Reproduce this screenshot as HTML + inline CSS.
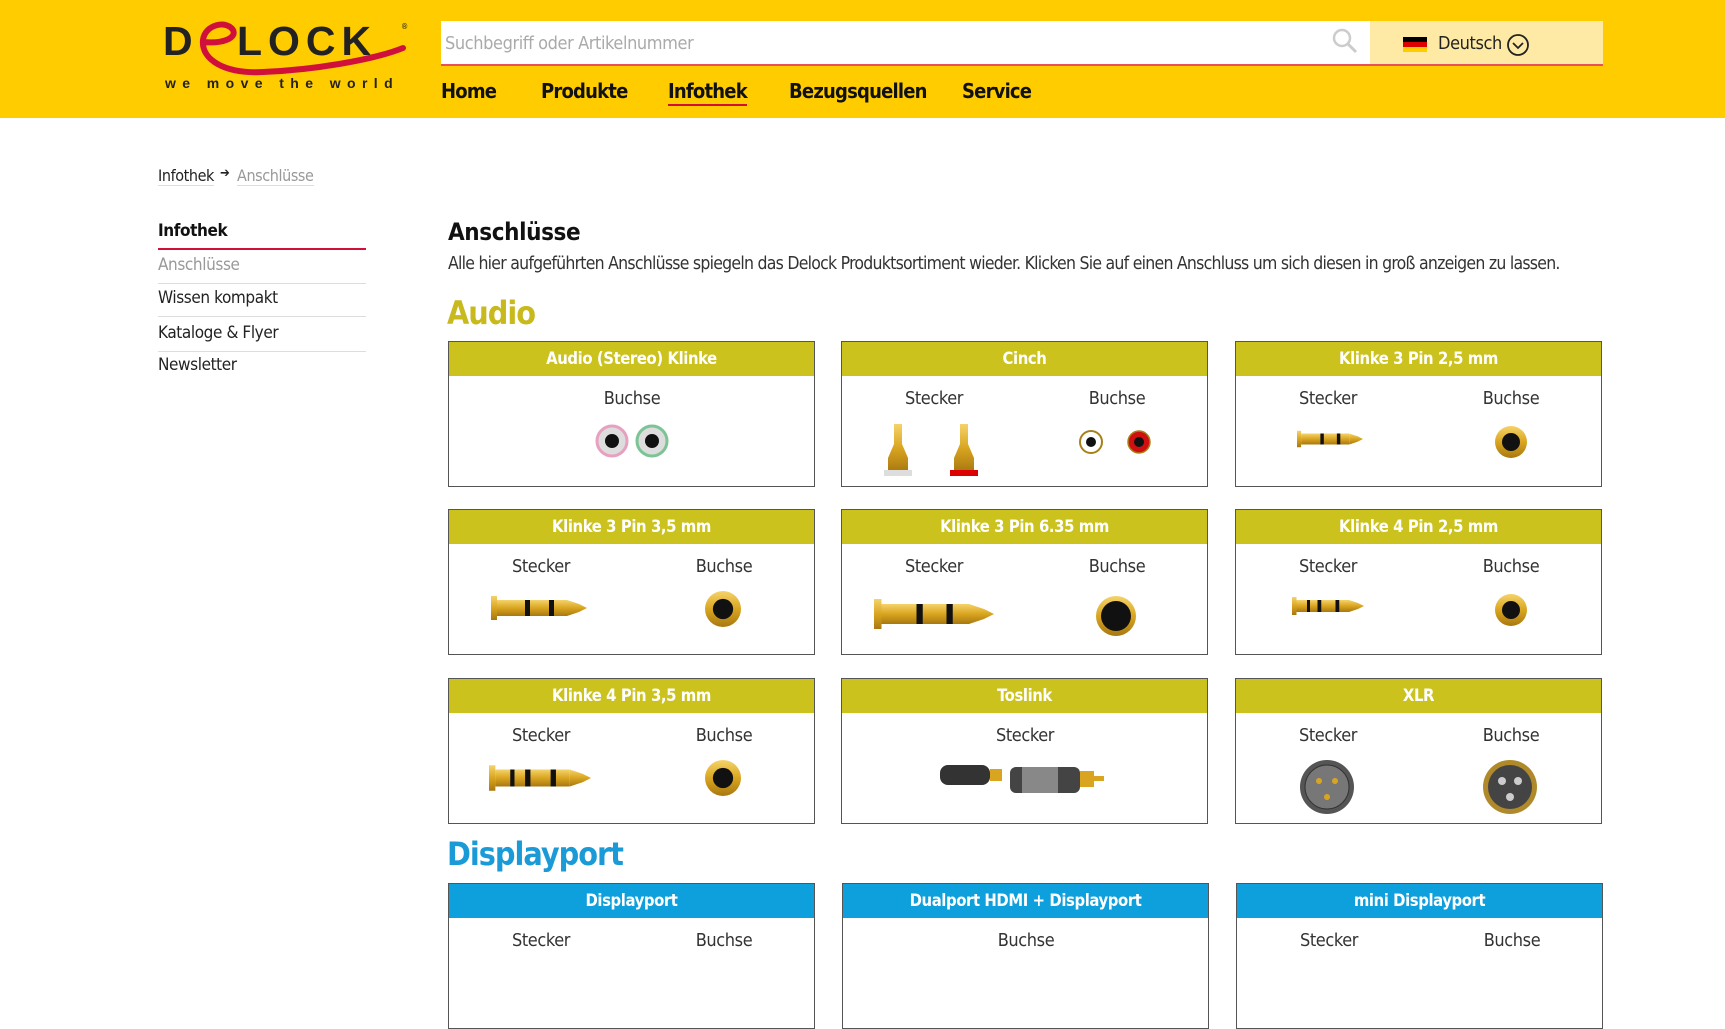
<!DOCTYPE html>
<html><head><meta charset="utf-8"><style>
*{margin:0;padding:0;box-sizing:border-box}
body{width:1725px;height:968px;overflow:hidden;background:#fff;font-family:"Liberation Sans Narrow","DejaVu Sans Condensed","Liberation Sans",sans-serif;color:#222;position:relative;letter-spacing:-0.4px}
.a{position:absolute}
#hd{left:0;top:0;width:1725px;height:118px;background:#ffcc00}
.nav{top:79px;font-size:20px;font-weight:bold;color:#111;letter-spacing:-0.8px}
.card{position:absolute;width:367px;height:146px;border:1px solid #555;background:#fff}
.card .h{height:34px;background:#cbc21e;color:#fff;font-weight:bold;font-size:16.5px;text-align:center;line-height:34px}
.card.b .h{background:#0ea0dc}
.lbl{position:absolute;top:46px;font-size:18px;color:#333;width:120px;margin-left:-60px;text-align:center}
.img{position:absolute;top:78px}
.side{left:158px;width:208px;font-size:17px;border-bottom:1px solid #ddd;height:34px;line-height:30px}
</style></head><body>
<div id="hd" class="a"></div>
<!-- logo -->
<div class="a" style="left:163px;top:18px;width:250px;height:80px;letter-spacing:0">
<div class="a" style="left:0;top:0;font-family:'Liberation Sans',sans-serif;font-weight:bold;font-size:41px;color:#222">D</div>
<div class="a" style="left:74px;top:0;font-family:'Liberation Sans',sans-serif;font-weight:bold;font-size:41px;color:#222;letter-spacing:6px">LOCK</div>
<div class="a" style="left:238px;top:4px;font-size:8px;color:#222">®</div>
<svg class="a" style="left:0;top:0" width="250" height="75"><path d="M40 24 C60 26 74 20 70 12 C64 2 42 6 40 22 C38 42 62 56 100 54 C150 52 210 42 240 30" fill="none" stroke="#d0103a" stroke-width="6" stroke-linecap="round"/></svg>
<div class="a" style="left:2px;top:57px;font-family:'Liberation Sans',sans-serif;font-weight:bold;font-size:14px;letter-spacing:6.4px;color:#222;white-space:nowrap">we move the world</div>
</div>
<!-- search -->
<div class="a" style="left:441px;top:21px;width:929px;height:45px;background:#fff;border-bottom:2px solid #e8505b"></div>
<div class="a" style="left:445px;top:33px;font-size:18px;color:#aaa">Suchbegriff oder Artikelnummer</div>
<svg class="a" style="left:1332px;top:28px" width="26" height="26"><circle cx="10" cy="10" r="8" fill="none" stroke="#ccc" stroke-width="2.5"/><line x1="16" y1="16" x2="24" y2="24" stroke="#ccc" stroke-width="3"/></svg>
<div class="a" style="left:1370px;top:21px;width:233px;height:45px;background:#ffeaa5;border-bottom:2px solid #e8505b"></div>
<div class="a" style="left:1403px;top:37px;width:24px;height:15px"><div style="height:5px;background:#000"></div><div style="height:5px;background:#d00"></div><div style="height:5px;background:#fc0"></div></div>
<div class="a" style="left:1438px;top:33px;font-size:18px;color:#222">Deutsch</div>
<svg class="a" style="left:1506px;top:33px" width="24" height="24"><circle cx="12" cy="12" r="10" fill="none" stroke="#222" stroke-width="1.8"/><path d="M7 10l5 5 5-5" fill="none" stroke="#222" stroke-width="1.8"/></svg>
<div class="a nav" style="left:441px">Home</div>
<div class="a nav" style="left:541px">Produkte</div>
<div class="a nav" style="left:668px;border-bottom:2px solid #d0103a;padding-bottom:1px">Infothek</div>
<div class="a nav" style="left:789px">Bezugsquellen</div>
<div class="a nav" style="left:962px">Service</div>
<!-- breadcrumb -->
<div class="a" style="left:158px;top:166px;font-size:16px;border-bottom:1px solid #ddd">Infothek</div>
<div class="a" style="left:220px;top:166px;font-size:13px">➔</div>
<div class="a" style="left:237px;top:166px;font-size:16px;color:#999;border-bottom:1px solid #ddd">Anschlüsse</div>
<!-- sidebar -->
<div class="a side" style="top:216px;font-weight:bold;border-bottom:2px solid #d0103a;font-size:17px;color:#111">Infothek</div>
<div class="a side" style="top:250px;color:#999">Anschlüsse</div>
<div class="a side" style="top:283px">Wissen kompakt</div>
<div class="a side" style="top:318px">Kataloge &amp; Flyer</div>
<div class="a" style="left:158px;top:355px;font-size:17px">Newsletter</div>
<!-- content -->
<div class="a" style="left:448px;top:218px;font-size:24px;font-weight:bold;color:#111">Anschlüsse</div>
<div class="a" style="left:448px;top:254px;font-size:17.5px;color:#333;white-space:nowrap;letter-spacing:-0.75px">Alle hier aufgeführten Anschlüsse spiegeln das Delock Produktsortiment wieder. Klicken Sie auf einen Anschluss um sich diesen in groß anzeigen zu lassen.</div>
<div class="a" style="left:447px;top:294px;font-size:32px;font-weight:bold;color:#c8b91c;letter-spacing:-1px">Audio</div>
<div class="a" style="left:447px;top:835px;font-size:32px;font-weight:bold;color:#1a9ad6;letter-spacing:-1px">Displayport</div>

<svg width="0" height="0" style="position:absolute"><defs>
<linearGradient id="g" x1="0" y1="0" x2="0" y2="1"><stop offset="0" stop-color="#f5d36a"/><stop offset=".5" stop-color="#d9a520"/><stop offset="1" stop-color="#a87810"/></linearGradient>
<g id="plug"><rect x="0" y="4" width="6" height="24" fill="url(#g)"/><rect x="6" y="8" width="70" height="16" fill="url(#g)"/><path d="M76 8 L88 12 L96 16 L88 20 L76 24Z" fill="url(#g)"/><rect x="34" y="8" width="5" height="16" fill="#111"/><rect x="58" y="8" width="5" height="16" fill="#111"/></g>
<g id="sock"><circle cx="16" cy="16" r="16" fill="url(#g)"/><circle cx="16" cy="16" r="9" fill="#111"/></g>
</defs></svg>

<!-- row 1 -->
<div class="card" style="left:448px;top:341px"><div class="h">Audio (Stereo) Klinke</div><div class="lbl" style="left:183px">Buchse</div>
<svg class="img" style="left:146px;top:82px" width="80" height="34"><circle cx="17" cy="17" r="15" fill="#ddd" stroke="#e8a0c0" stroke-width="3"/><circle cx="17" cy="17" r="7" fill="#111"/><circle cx="57" cy="17" r="15" fill="#ddd" stroke="#7cc496" stroke-width="3"/><circle cx="57" cy="17" r="7" fill="#111"/></svg></div>
<div class="card" style="left:841px;top:341px"><div class="h">Cinch</div><div class="lbl" style="left:92px">Stecker</div><div class="lbl" style="left:275px">Buchse</div>
<svg class="img" style="left:38px;top:82px" width="110" height="60"><g><path d="M14 0h8v20l6 14v14h-20v-14l6-14z" fill="url(#g)"/><rect x="4" y="46" width="28" height="6" fill="#ddd"/></g><g transform="translate(66 0)"><path d="M14 0h8v20l6 14v14h-20v-14l6-14z" fill="url(#g)"/><rect x="4" y="46" width="28" height="6" fill="#d00"/></g></svg>
<svg class="img" style="left:237px;top:88px" width="90" height="24"><circle cx="12" cy="12" r="11" fill="#fff" stroke="#a8801a" stroke-width="2"/><circle cx="12" cy="12" r="5" fill="#111"/><circle cx="60" cy="12" r="11" fill="#d01010" stroke="#a8801a" stroke-width="1.5"/><circle cx="60" cy="12" r="5" fill="#111"/></svg></div>
<div class="card" style="left:1235px;top:341px"><div class="h">Klinke 3 Pin 2,5 mm</div><div class="lbl" style="left:92px">Stecker</div><div class="lbl" style="left:275px">Buchse</div>
<svg class="img" style="left:52px;top:86px" width="84" height="22" viewBox="0 0 96 32"><use href="#plug"/></svg>
<svg class="img" style="left:259px;top:84px" width="32" height="32"><use href="#sock"/></svg></div>
<!-- row 2 -->
<div class="card" style="left:448px;top:509px"><div class="h">Klinke 3 Pin 3,5 mm</div><div class="lbl" style="left:92px">Stecker</div><div class="lbl" style="left:275px">Buchse</div>
<svg class="img" style="left:40px;top:82px" width="100" height="32" viewBox="0 0 96 32"><use href="#plug"/></svg>
<svg class="img" style="left:256px;top:81px" width="36" height="36" viewBox="0 0 32 32"><use href="#sock"/></svg></div>
<div class="card" style="left:841px;top:509px"><div class="h">Klinke 3 Pin 6.35 mm</div><div class="lbl" style="left:92px">Stecker</div><div class="lbl" style="left:275px">Buchse</div>
<svg class="img" style="left:22px;top:84px" width="140" height="40" viewBox="0 0 96 32"><use href="#plug"/></svg>
<svg class="img" style="left:254px;top:86px" width="40" height="40" viewBox="0 0 32 32"><circle cx="16" cy="16" r="16" fill="url(#g)"/><circle cx="16" cy="16" r="12" fill="#111"/></svg></div>
<div class="card" style="left:1235px;top:509px"><div class="h">Klinke 4 Pin 2,5 mm</div><div class="lbl" style="left:92px">Stecker</div><div class="lbl" style="left:275px">Buchse</div>
<svg class="img" style="left:48px;top:84px" width="88" height="24" viewBox="0 0 96 32"><use href="#plug"/><rect x="20" y="8" width="4" height="16" fill="#111"/></svg>
<svg class="img" style="left:259px;top:84px" width="32" height="32"><use href="#sock"/></svg></div>
<!-- row 3 -->
<div class="card" style="left:448px;top:678px"><div class="h">Klinke 4 Pin 3,5 mm</div><div class="lbl" style="left:92px">Stecker</div><div class="lbl" style="left:275px">Buchse</div>
<svg class="img" style="left:36px;top:82px" width="110" height="34" viewBox="0 0 96 32"><use href="#plug"/><rect x="20" y="8" width="4" height="16" fill="#111"/></svg>
<svg class="img" style="left:256px;top:81px" width="36" height="36" viewBox="0 0 32 32"><use href="#sock"/></svg></div>
<div class="card" style="left:841px;top:678px"><div class="h">Toslink</div><div class="lbl" style="left:183px">Stecker</div>
<svg class="img" style="left:96px;top:80px" width="180" height="36"><rect x="2" y="6" width="50" height="20" rx="8" fill="#333"/><rect x="52" y="10" width="12" height="12" fill="#d9a520"/><rect x="72" y="8" width="70" height="26" rx="6" fill="#444"/><rect x="84" y="8" width="36" height="26" fill="#888"/><rect x="142" y="12" width="14" height="16" fill="#d9a520"/><rect x="156" y="17" width="10" height="5" fill="#d9a520"/></svg></div>
<div class="card" style="left:1235px;top:678px"><div class="h">XLR</div><div class="lbl" style="left:92px">Stecker</div><div class="lbl" style="left:275px">Buchse</div>
<svg class="img" style="left:63px;top:80px" width="56" height="56"><circle cx="28" cy="28" r="27" fill="#555"/><circle cx="28" cy="28" r="22" fill="#777" stroke="#333"/><circle cx="20" cy="22" r="3" fill="#d9a520"/><circle cx="36" cy="22" r="3" fill="#d9a520"/><circle cx="28" cy="38" r="3" fill="#d9a520"/></svg>
<svg class="img" style="left:246px;top:80px" width="56" height="56"><circle cx="28" cy="28" r="27" fill="#b08a2a"/><circle cx="28" cy="28" r="22" fill="#444"/><circle cx="20" cy="22" r="4" fill="#ccc"/><circle cx="36" cy="22" r="4" fill="#ccc"/><circle cx="28" cy="38" r="4" fill="#ccc"/></svg></div>
<!-- displayport -->
<div class="card b" style="left:448px;top:883px"><div class="h">Displayport</div><div class="lbl" style="left:92px">Stecker</div><div class="lbl" style="left:275px">Buchse</div></div>
<div class="card b" style="left:842px;top:883px"><div class="h">Dualport HDMI + Displayport</div><div class="lbl" style="left:183px">Buchse</div></div>
<div class="card b" style="left:1236px;top:883px"><div class="h">mini Displayport</div><div class="lbl" style="left:92px">Stecker</div><div class="lbl" style="left:275px">Buchse</div></div>
</body></html>
